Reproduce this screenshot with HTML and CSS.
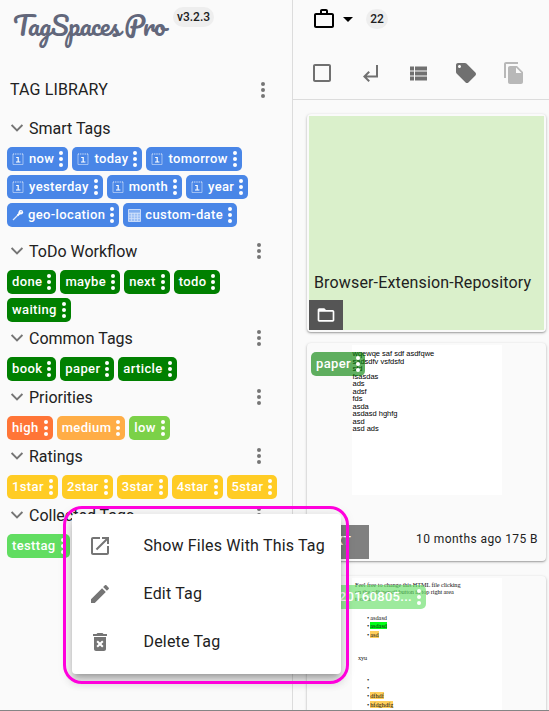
FILE: index.html
```html
<!DOCTYPE html>
<html lang="en">
<head>
<meta charset="utf-8">
<title>TagSpaces Pro</title>
<link rel="stylesheet" href="styles.css">
</head>
<body>
<svg class="defs" width="0" height="0">
  <symbol id="more" viewBox="0 0 6 18"><circle cx="3" cy="3" r="2"/><circle cx="3" cy="9" r="2"/><circle cx="3" cy="15" r="2"/></symbol>
  <symbol id="chev" viewBox="0 0 12 8"><path d="M.6 1l5.400 5.400L11.400 1" fill="none" stroke="#757575" stroke-width="1.900"/></symbol>
  <symbol id="cal" viewBox="0 0 12 14"><path d="M1 2v10.5h10V2" fill="none" stroke="#b5cef6" stroke-width=".8"/><path d="M1 2h10" fill="none" stroke="#e2ecfc" stroke-width="1" stroke-dasharray="1.2 1"/><path d="M4.2 5.5h2V10M4 10h4.400" fill="none" stroke="#fff" stroke-width="1.2"/></symbol>
  <symbol id="pin" viewBox="0 0 12 12"><path d="M1 11l5-5" stroke="#dce8fb" stroke-width="1.2"/><path d="M5.500 6.500L8.500 3.500" stroke="#fff" stroke-width="1.800"/><circle cx="8.800" cy="3.200" r="2.300" fill="#fff"/><circle cx="9" cy="2.800" r=".8" fill="#8ab1f1"/></symbol>
  <symbol id="grid" viewBox="0 0 13 13"><path d="M.5.500h12v12H.5z" fill="#9cbff5" stroke="#c5d9f9"/><path d="M1 2h11" stroke="#6b9dee"/><path d="M1 4.500h11M1 7h11M1 9.500h11M3.500 4v8M6.500 4v8M9.500 4v8" stroke="#d3e2fa" stroke-width=".7"/></symbol>
</svg>
<div class="app">
  <aside class="sidebar">
    <div class="brand"><span class="logo">TagSpaces Pro</span><span class="version">v3.2.3</span></div>
    <div class="library"><span>TAG LIBRARY</span><svg class="dots"><use href="#more"/></svg></div>

    <section class="group smart">
      <header><svg class="chev"><use href="#chev"/></svg><h2>Smart Tags</h2></header>
      <div class="tags blue">
        <span class="tag"><svg class="ic"><use href="#cal"/></svg><b>now</b><svg class="m"><use href="#more"/></svg></span>
        <span class="tag"><svg class="ic"><use href="#cal"/></svg><b>today</b><svg class="m"><use href="#more"/></svg></span>
        <span class="tag"><svg class="ic"><use href="#cal"/></svg><b>tomorrow</b><svg class="m"><use href="#more"/></svg></span>
        <span class="tag"><svg class="ic"><use href="#cal"/></svg><b>yesterday</b><svg class="m"><use href="#more"/></svg></span>
        <span class="tag"><svg class="ic"><use href="#cal"/></svg><b>month</b><svg class="m"><use href="#more"/></svg></span>
        <span class="tag"><svg class="ic"><use href="#cal"/></svg><b>year</b><svg class="m"><use href="#more"/></svg></span>
        <span class="tag"><svg class="ic pin"><use href="#pin"/></svg><b>geo-location</b><svg class="m"><use href="#more"/></svg></span>
        <span class="tag"><svg class="ic grid"><use href="#grid"/></svg><b>custom-date</b><svg class="m"><use href="#more"/></svg></span>
      </div>
    </section>

    <section class="group">
      <header><svg class="chev"><use href="#chev"/></svg><h2>ToDo Workflow</h2><svg class="dots"><use href="#more"/></svg></header>
      <div class="tags green">
        <span class="tag"><b>done</b><svg class="m"><use href="#more"/></svg></span>
        <span class="tag"><b>maybe</b><svg class="m"><use href="#more"/></svg></span>
        <span class="tag"><b>next</b><svg class="m"><use href="#more"/></svg></span>
        <span class="tag"><b>todo</b><svg class="m"><use href="#more"/></svg></span>
        <span class="tag"><b>waiting</b><svg class="m"><use href="#more"/></svg></span>
      </div>
    </section>

    <section class="group">
      <header><svg class="chev"><use href="#chev"/></svg><h2>Common Tags</h2><svg class="dots"><use href="#more"/></svg></header>
      <div class="tags green">
        <span class="tag"><b>book</b><svg class="m"><use href="#more"/></svg></span>
        <span class="tag"><b>paper</b><svg class="m"><use href="#more"/></svg></span>
        <span class="tag"><b>article</b><svg class="m"><use href="#more"/></svg></span>
      </div>
    </section>

    <section class="group">
      <header><svg class="chev"><use href="#chev"/></svg><h2>Priorities</h2><svg class="dots"><use href="#more"/></svg></header>
      <div class="tags">
        <span class="tag high"><b>high</b><svg class="m"><use href="#more"/></svg></span>
        <span class="tag medium"><b>medium</b><svg class="m"><use href="#more"/></svg></span>
        <span class="tag low"><b>low</b><svg class="m"><use href="#more"/></svg></span>
      </div>
    </section>

    <section class="group">
      <header><svg class="chev"><use href="#chev"/></svg><h2>Ratings</h2><svg class="dots"><use href="#more"/></svg></header>
      <div class="tags yellow">
        <span class="tag"><b>1star</b><svg class="m"><use href="#more"/></svg></span>
        <span class="tag"><b>2star</b><svg class="m"><use href="#more"/></svg></span>
        <span class="tag"><b>3star</b><svg class="m"><use href="#more"/></svg></span>
        <span class="tag"><b>4star</b><svg class="m"><use href="#more"/></svg></span>
        <span class="tag"><b>5star</b><svg class="m"><use href="#more"/></svg></span>
      </div>
    </section>

    <section class="group">
      <header><svg class="chev"><use href="#chev"/></svg><h2>Collected Tags</h2><svg class="dots"><use href="#more"/></svg></header>
      <div class="tags">
        <span class="tag collected"><b>testtag</b><svg class="m"><use href="#more"/></svg></span>
      </div>
    </section>
  </aside>

  <main class="content">
    <div class="location">
      <svg class="case" viewBox="0 0 24 24"><path d="M14 6V4h-4v2h4zM4 8v11h16V8H4zm16-2c1.110 0 2 .890 2 2v11c0 1.110-.890 2-2 2H4c-1.110 0-2-.890-2-2l.010-11c0-1.110.880-2 1.990-2h4V4c0-1.110.890-2 2-2h4c1.110 0 2 .890 2 2v2h4z"/></svg>
      <svg class="caret" viewBox="0 0 10 5"><path d="M0 0l5 5 5-5z"/></svg>
      <span class="count">22</span>
    </div>
    <div class="toolbar">
      <svg viewBox="0 0 24 24"><path d="M19 5v14H5V5h14m0-2H5c-1.100 0-2 .900-2 2v14c0 1.100.900 2 2 2h14c1.100 0 2-.900 2-2V5c0-1.100-.900-2-2-2z"/></svg>
      <svg viewBox="0 0 24 24"><path d="M18 4v10.500H8.830l3.080-3.090L10.500 10 5 15.500l5.500 5.500 1.410-1.410-3.080-3.090H20V4z"/></svg>
      <svg viewBox="0 0 24 24"><path d="M4 14.500h4v-4H4v4zm0 5h4v-4H4v4zM4 9.500h4v-4H4v4zm5 5h12v-4H9v4zm0 5h12v-4H9v4zM9 5.500v4h12v-4H9z"/></svg>
      <svg viewBox="0 0 24 24"><path d="M21.410 11.580l-9-9C12.050 2.220 11.550 2 11 2H4c-1.100 0-2 .900-2 2v7c0 .550.220 1.050.590 1.420l9 9c.360.360.860.580 1.410.580s1.050-.220 1.410-.590l7-7c.370-.360.590-.860.590-1.410s-.230-1.060-.590-1.420zM5.500 7C4.670 7 4 6.330 4 5.500S4.670 4 5.500 4 7 4.670 7 5.500 6.330 7 5.500 7z"/></svg>
      <svg class="off" viewBox="0 0 24 24"><path d="M16 1H4c-1.100 0-2 .900-2 2v14h2V3h12V1zm-1 4l6 6v10c0 1.100-.900 2-2 2H7.990C6.890 23 6 22.100 6 21l.010-14c0-1.100.890-2 1.990-2h7zm-1 7h5.500L14 6.500V12z"/></svg>
    </div>
    <div class="files">
      <article class="card folder">
        <div class="fill">
          <span class="name">Browser-Extension-Repository</span>
          <span class="type"><svg viewBox="0 0 24 24"><path d="M20 6h-8l-2-2H4c-1.100 0-1.990.900-1.990 2L2 18c0 1.100.900 2 2 2h16c1.100 0 2-.900 2-2V8c0-1.100-.900-2-2-2zm0 12H4V8h16v10z"/></svg></span>
        </div>
      </article>
      <article class="card text">
        <div class="thumb sans">wqewqe saf sdf asdfqwe<br>sadsdfv vsfdsfd<br>sfd<br>fsasdas<br>ads<br>adsf<br>fds<br>asda<br>asdasd hghfg<br>asd<br>asd ads</div>
        <span class="tag over paper"><b>paper</b><svg class="m"><use href="#more"/></svg></span>
        <div class="foot"><span class="ext">TXT</span><span class="meta">10 months ago 175 B</span></div>
      </article>
      <article class="card html">
        <div class="thumb serif">
          <p>Feel free to change this HTML file clicking<br>on the edit/pencil button in top right area<br>toolbar</p>
          <ul class="first"><li><span>asdasd</span></li><li><span class="lime">asdasd</span></li><li><span class="amber">asd</span></li></ul>
          <p class="xyu">xyu</p>
          <ul><li></li><li></li><li><span class="amber">dfhdf</span></li><li><span class="amber">hfdghdfg</span></li></ul>
        </div>
        <span class="tag over date"><b>20160805...</b><svg class="m"><use href="#more"/></svg></span>
      </article>
    </div>
  </main>

  <div class="highlight"></div>
  <div class="menu">
    <div class="item"><svg viewBox="0 0 24 24"><path d="M19 19H5V5h7V3H5c-1.110 0-2 .900-2 2v14c0 1.100.890 2 2 2h14c1.100 0 2-.900 2-2v-7h-2v7zM14 3v2h3.590l-9.830 9.830 1.410 1.410L19 6.410V10h2V3h-7z"/></svg><span>Show Files With This Tag</span></div>
    <div class="item"><svg viewBox="0 0 24 24"><path d="M3 17.250V21h3.750L17.810 9.940l-3.750-3.750L3 17.250zM20.710 7.040c.390-.390.390-1.020 0-1.410l-2.340-2.340c-.390-.390-1.020-.390-1.410 0l-1.830 1.830 3.750 3.750 1.830-1.830z"/></svg><span>Edit Tag</span></div>
    <div class="item"><svg viewBox="0 0 24 24"><path fill-rule="evenodd" d="M6 19c0 1.100.900 2 2 2h8c1.100 0 2-.900 2-2V7H6v12zm2.460-7.120l1.410-1.410L12 12.590l2.120-2.120 1.410 1.410L13.410 14l2.120 2.120-1.410 1.410L12 15.410l-2.120 2.120-1.410-1.410L10.590 14l-2.130-2.120zM15.500 4l-1-1h-5l-1 1H5v2h14V4z"/></svg><span>Delete Tag</span></div>
  </div>
</div>
</body>
</html>
```
FILE: styles.css
```css
* { box-sizing: border-box; }
body { margin: 0; font-family: Roboto, "Liberation Sans", sans-serif; color: #212121; background: #fafafa; }
svg { flex: none; display: block; }
.defs { position: absolute; }
.app { position: relative; display: flex; width: 549px; height: 711px; overflow: hidden; border-bottom: 1px solid #858585; }

.sidebar { width: 293px; flex: none; border-right: 1px solid #dcdcdc; }
.brand { height: 67px; display: flex; align-items: flex-start; padding: 6px 0 0 13px; }
.logo { width: 160px; white-space: nowrap; font: 400 26px/38px Pacifico, cursive; letter-spacing: -.85px; word-spacing: -1px; color: #62677b; }
.version { height: 20px; margin-top: 1px; padding: 0 4px; border-radius: 10px; background: #eee; font-size: 12px; font-weight: 500; line-height: 20px; letter-spacing: 0; }
.library { height: 45px; display: flex; align-items: center; justify-content: space-between; padding: 0 26px 0 10px; font-size: 16px; letter-spacing: .13px; }
.dots { width: 6px; height: 18px; fill: #757575; }
.smart { margin-bottom: 8px; }
.group header { height: 32px; margin-bottom: 3px; padding: 0 30px 0 11px; display: flex; align-items: center; }
.group header .dots { margin-left: auto; }
.chev { width: 12px; height: 8px; margin-right: 6px; }
h2 { margin: 0; font-size: 16px; font-weight: 400; letter-spacing: 0; }

.tags { display: flex; flex-wrap: wrap; gap: 4px; padding: 0 8px 0 7px; }
.tag { display: flex; align-items: center; height: 24px; padding-left: 5px; border-radius: 5px; color: #fff; font-size: 13px; letter-spacing: .37px; white-space: nowrap; }
.tag b { font-weight: 500; padding-bottom: 1.5px; }
.m { width: 6px; height: 18px; margin: 0 4px; fill: #fff; }
.ic { width: 12px; height: 14px; margin-right: 5px; }
.ic.pin { height: 12px; margin-right: 4px; }
.ic.grid { width: 13px; height: 13px; margin-right: 4px; }
.blue .tag { background: #4986e7; }
.green .tag { background: #008000; }
.yellow .tag { background: #ffcc24; }
.tag.high { background: #ff7537; }
.tag.medium { background: #ffad46; }
.tag.low { background: #7bd148; }
.tag.collected { background: #61dd61; }

.content { flex: 1; min-width: 0; }
.location { height: 46px; display: flex; align-items: center; padding: 0 0 8px 19px; }
.case { width: 24px; height: 24px; }
.caret { width: 10px; height: 5px; margin-left: 7px; }
.count { width: 22px; height: 20px; margin-left: 13px; border-radius: 10px; background: #eee; font-size: 12px; font-weight: 500; line-height: 20px; text-align: center; }
.toolbar { height: 54px; padding-left: 17px; display: flex; align-items: center; gap: 24px; border-bottom: 1px solid #dcdcdc; }
.toolbar svg { width: 24px; height: 24px; fill: #707070; }
.toolbar .off { fill: #b8b8b8; }
.files { padding: 14px 3px 0 14px; }
.card { position: relative; height: 218px; border-radius: 4px; background: #fafafa; box-shadow: 0 1px 3px rgba(0,0,0,.28), 0 1px 1px rgba(0,0,0,.14); }
.folder { padding: 2px; margin-bottom: 11px; }
.fill { height: 214px; background: #daf0cb; display: flex; flex-direction: column; justify-content: flex-end; }
.name { padding-left: 5px; margin-bottom: 5px; font-size: 16px; line-height: 24px; letter-spacing: .15px; white-space: nowrap; }
.type { width: 34px; height: 30px; background: #555; display: flex; align-items: center; justify-content: center; }
.type svg { width: 20px; height: 20px; fill: #fff; }
.text { margin-bottom: 15px; padding-top: 2px; display: flex; flex-direction: column; justify-content: space-between; }
.thumb { width: 150px; height: 150px; margin-left: 45px; background: #fff; overflow: hidden; white-space: nowrap; }
.sans { padding: 5px 0 0 .5px; font: 7.5px/7.5px "Liberation Sans", sans-serif; color: #000; }
.over { position: absolute; left: 4px; top: 9px; }
.paper { background: rgba(0,128,0,.62); }
.foot { display: flex; align-items: center; justify-content: space-between; padding: 0 8px 2px 2px; }
.ext { width: 60px; height: 34px; background: #808080; color: #fff; font-size: 13px; font-weight: 500; line-height: 32px; text-align: center; }
.meta { margin-bottom: 6px; font-size: 12px; letter-spacing: .42px; }
.html { padding-top: 2px; }
.serif { padding: 3px 0 0 3px; font: 6.3px/7px "Liberation Serif", serif; color: #111; }
.serif p, .serif ul { margin: 0; }
.serif p { letter-spacing: -.1px; }
.serif ul { padding: 0 0 0 12px; line-height: 8.3px; list-style: none; }
.serif li { height: 8.3px; }
.serif li::before { content: "•"; margin-right: 1px; }
.serif .first { margin-top: 12px; }
.serif .xyu { margin: 15px 0 15px 3px; }
.lime { background: #00ff16; }
.amber { background: #ffcf5c; }
.date { width: 115px; justify-content: flex-end; letter-spacing: .3px; background: rgba(97,221,97,.62); }

.highlight { position: absolute; left: 63px; top: 506px; width: 286px; height: 178px; border: 3px solid #ff00dc; border-radius: 19px; z-index: 2; }
.menu { position: absolute; left: 72px; top: 514px; width: 269px; height: 160px; padding: 8px 0; border-radius: 4px; background: #fff; box-shadow: 0 5px 5px -3px rgba(0,0,0,.2), 0 8px 10px 1px rgba(0,0,0,.14), 0 3px 14px 2px rgba(0,0,0,.12); }
.item { height: 48px; padding-left: 16px; display: flex; align-items: center; font-size: 16px; letter-spacing: .18px; white-space: nowrap; }
.item span { padding-bottom: 2px; }
.item svg { width: 24px; height: 24px; margin-right: 31.5px; fill: #757575; }
```
